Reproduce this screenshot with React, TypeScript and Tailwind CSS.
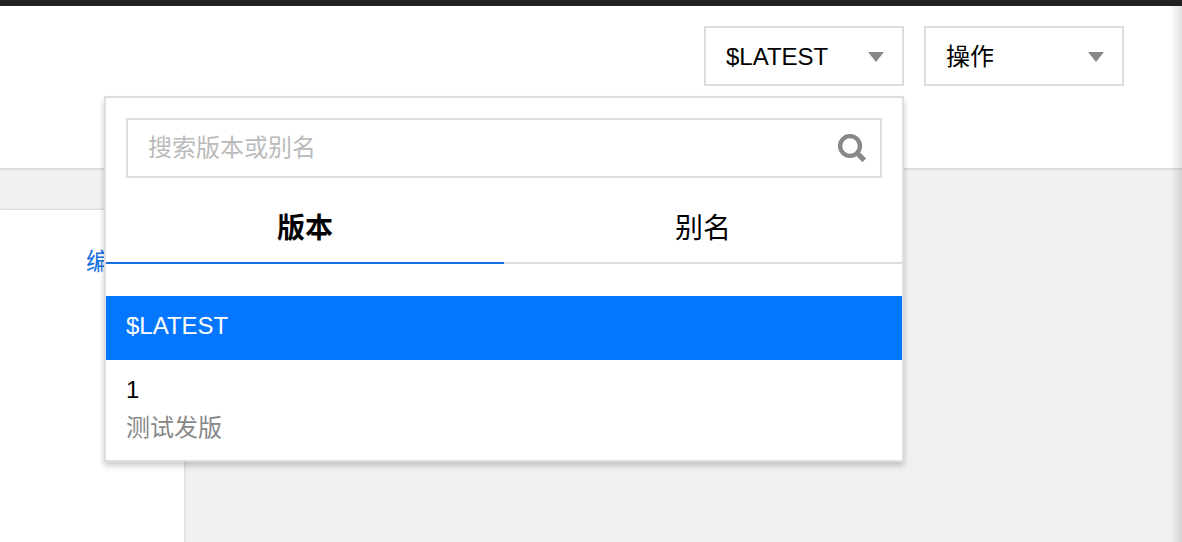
import { useState } from 'react'
import clsx from 'clsx'

type Tab = 'version' | 'alias'

const TABS: { id: Tab; label: string }[] = [
  { id: 'version', label: '版本' },
  { id: 'alias', label: '别名' },
]

const VERSIONS = [
  { name: '$LATEST', description: '' },
  { name: '1', description: '测试发版' },
]

function Caret() {
  return (
    <svg aria-hidden className="pointer-events-none h-[10px] w-4 shrink-0 fill-[#888]" viewBox="0 0 16 10">
      <path d="M0 0h16L8 10z" />
    </svg>
  )
}

function SearchIcon() {
  return (
    <svg aria-hidden className="size-7 shrink-0" viewBox="0 0 28 28" fill="none" stroke="#888">
      <circle cx="12" cy="12" r="9.9" strokeWidth="4.4" />
      <path d="M18.5 18.5l7.8 7.8" strokeWidth="5.2" />
    </svg>
  )
}

function VersionMenu({ selected, onSelect }: { selected: string; onSelect: (name: string) => void }) {
  const [tab, setTab] = useState<Tab>('version')
  const [query, setQuery] = useState('')
  const items = tab === 'version' ? VERSIONS.filter((v) => v.name.includes(query)) : []

  return (
    <div className="absolute top-full right-0 z-10 mt-[10px] w-[800px] border-2 border-[#ddd] bg-white shadow-[0_4px_6px_rgba(0,0,0,0.2)]">
      <div className="p-5 pb-4">
        <label className="flex h-[60px] items-center border-2 border-[#ddd] pr-3.5 pl-5">
          <input
            type="text"
            aria-label="搜索版本或别名"
            placeholder="搜索版本或别名"
            value={query}
            onChange={(e) => setQuery(e.target.value)}
            className="min-w-0 flex-1 bg-transparent outline-none placeholder:text-[#bbb]"
          />
          <SearchIcon />
        </label>
      </div>

      <div role="tablist" className="flex">
        {TABS.map((t) => (
          <button
            key={t.id}
            type="button"
            role="tab"
            aria-selected={tab === t.id}
            onClick={() => setTab(t.id)}
            className={clsx(
              'h-[70px] flex-1 border-b-2 pt-0.5 text-[28px]',
              tab === t.id ? 'border-[#1470e0] font-bold' : 'border-[#ddd]'
            )}
          >
            {t.label}
          </button>
        ))}
      </div>

      <ul className="pt-8">
        {items.map((v) => (
          <li key={v.name}>
            <button
              type="button"
              onClick={() => onSelect(v.name)}
              className={clsx(
                'flex w-full flex-col items-start px-5 pt-[11px] leading-[38px]',
                v.description ? 'h-[100px]' : 'h-16',
                v.name === selected && 'bg-[#0576ff] text-white'
              )}
            >
              <span>{v.name}</span>
              {v.description && <span className="text-[#888]">{v.description}</span>}
            </button>
          </li>
        ))}
      </ul>
    </div>
  )
}

export default function App() {
  const [version, setVersion] = useState('$LATEST')

  return (
    <div className="relative flex min-h-screen flex-col overflow-hidden border-t-6 border-[#222] bg-[#f1f1f1] font-['Liberation_Sans','Noto_Sans_CJK_SC',sans-serif] text-[24px] text-black">
      <header className="flex h-41 justify-end gap-5 border-b-2 border-[#ddd] bg-white pt-5 pr-[58px]">
        <div className="relative h-[60px] w-[200px]">
          <button
            type="button"
            aria-haspopup="true"
            aria-expanded
            className="flex size-full items-center justify-between border-2 border-[#ddd] bg-white pt-0.5 pr-[18px] pl-5"
          >
            {version}
            <Caret />
          </button>
          <VersionMenu selected={version} onSelect={setVersion} />
        </div>

        <div className="grid h-[60px] w-[200px] items-center">
          <select
            aria-label="操作"
            className="col-start-1 row-start-1 size-full appearance-none border-2 border-[#ddd] bg-white px-5 pt-0.5 outline-none"
          >
            <option>操作</option>
          </select>
          <span className="pointer-events-none col-start-1 row-start-1 flex justify-self-end pt-0.5 pr-5">
            <Caret />
          </span>
        </div>
      </header>

      <main className="flex flex-1 pt-10">
        <section className="w-[184px] bg-white pt-[34px] pl-[86px] shadow-[0_0_3px_rgba(0,0,0,0.2)]">
          <a href="#edit" className="text-[#1470e0]">
            编
          </a>
        </section>
      </main>

      <div aria-hidden className="pointer-events-none absolute inset-y-0 right-0 w-3 bg-linear-to-r from-transparent to-black/12" />
    </div>
  )
}
